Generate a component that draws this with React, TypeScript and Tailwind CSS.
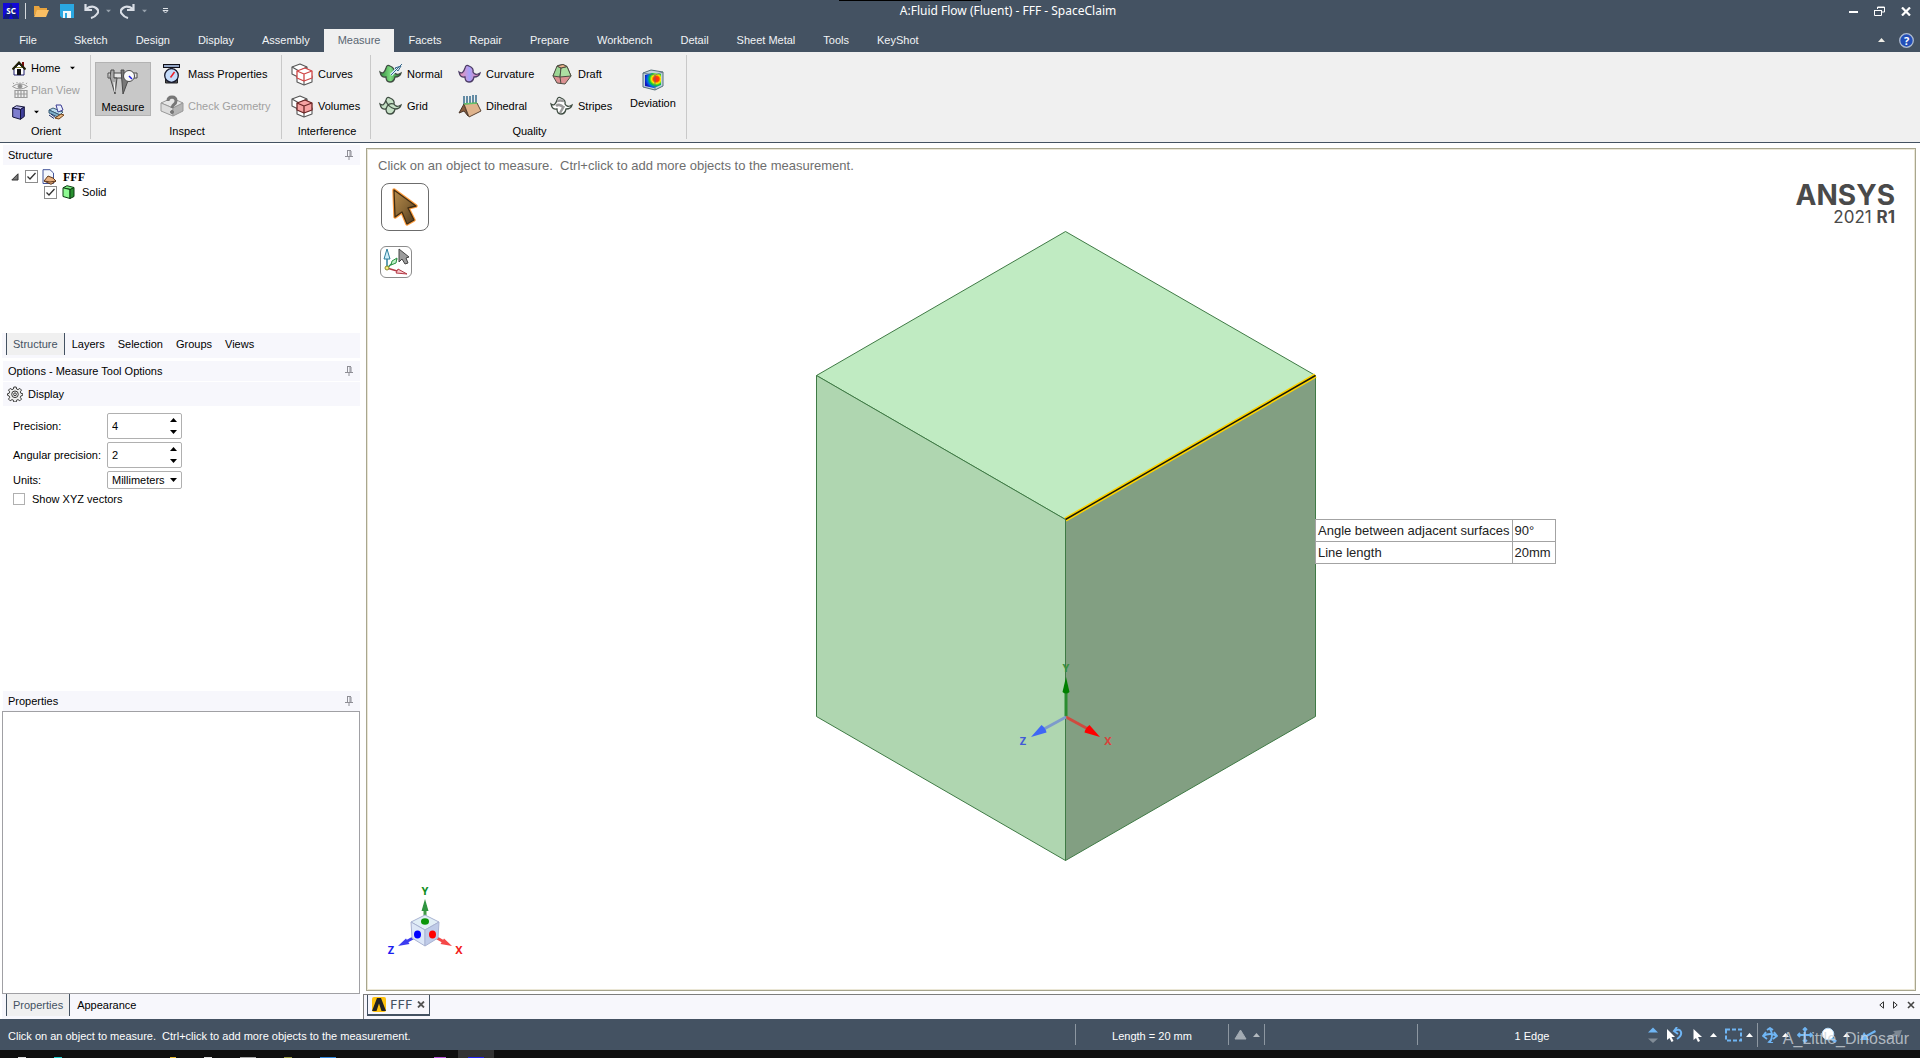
import React, { useState } from "react";

const icon = "shrink-0 block";

function HomeIcon() {
  return (
    <svg className={icon} width="14" height="15" viewBox="0 0 14 15">
      <rect x="10" y="1" width="2" height="5" fill="#7a0d0d" />
      <path d="M2 8v6h10V8L7 3z" fill="#fff" stroke="#1c1c6b" />
      <path d="M0.5 8.500 7 1.500l6.500 7" fill="none" stroke="#222208" strokeWidth="2" />
      <path d="M4 6.500h6" stroke="#8a8a32" />
      <rect x="5" y="8" width="4" height="6" fill="#111" />
    </svg>
  );
}

function PlanViewIcon() {
  return (
    <svg className={icon} width="16" height="16" viewBox="0 0 16 16" fill="none" stroke="#9b9b9b">
      <path d="M0.500 4.500Q8-1 15.500 4.500Q8 9.500.5 4.500z" />
      <path d="M2 2 1 .8M5 1V0M8 .6V0M11 1V0M14 2l1-1.200" />
      <circle cx="8" cy="4.300" r="2" fill="#8f8f8f" />
      <path d="M3 8.500h12v7H3zM3 12h12M6 8.500v7M9 8.500v7M12 8.500v7" strokeWidth="1.200" />
    </svg>
  );
}

function BlueCubeIcon() {
  return (
    <svg className={icon} width="13" height="15" viewBox="0 0 13 15" stroke="#14143c" strokeLinejoin="round">
      <path d="M.7 3 4.500.7 12.300 2 8.500 4.500z" fill="#b5b5e8" />
      <path d="M.7 3 8.500 4.500V14.300L.7 12z" fill="#7d7dce" />
      <path d="M8.500 4.500 12.300 2v9.500L8.500 14.300z" fill="#40409c" />
    </svg>
  );
}

function SpinViewIcon() {
  return (
    <svg className={icon} width="17" height="16" viewBox="0 0 17 16" strokeLinejoin="round">
      <path d="M1 6 5 4l10 4-3 3z" fill="#b9dcee" stroke="#3a5a74" />
      <path d="M8 1h5l2 5-5 2z" fill="#e9eefc" stroke="#3b3b92" />
      <path d="M1 6l11 5v3L1 9z" fill="#7fb0cc" stroke="#3a5a74" />
      <path d="M1 11l5 3.500M3 10l5 4" stroke="#1c2d6b" />
      <path d="M7 14l6-4 3 1-5 4z" fill="#e9b883" stroke="#70451c" />
    </svg>
  );
}

function CaliperIcon() {
  return (
    <svg className={icon} width="32" height="26" viewBox="0 0 32 26" stroke="#4a4a4a">
      <path d="M1 4h29v5H1z" fill="#e5e5e5" />
      <path d="M4 1h3v8h3l-2 16L3 8z" fill="#a8a8a8" />
      <path d="M14 1h3v8h5l-6 16-1-12z" fill="#787878" />
      <path d="M7 13l1 10" stroke="#fff" />
      <circle cx="22" cy="7" r="5.500" fill="#fafafa" />
      <path d="M22 7l3 3" stroke="#1c1ce0" strokeWidth="1.500" />
    </svg>
  );
}

function MassIcon() {
  return (
    <svg className={icon} width="20" height="20" viewBox="0 0 20 20">
      <rect x="1.500" y=".5" width="16" height="3" fill="#93a5c4" stroke="#101018" />
      <path d="M3.500 14v5h12v-5" fill="#555" stroke="#222" />
      <path d="M8 4h3v2H8z" fill="#333" />
      <circle cx="9.500" cy="11.500" r="6.800" fill="#c5dcfb" stroke="#16182c" strokeWidth="1.300" />
      <path d="M8.500 13.500 12.500 8" stroke="#ee1c25" strokeWidth="1.500" />
    </svg>
  );
}

function CheckGeometryIcon() {
  return (
    <svg className={icon} width="24" height="22" viewBox="0 0 24 22" stroke="#999" strokeLinejoin="round">
      <path d="M1 8 12 3l11 5-10 5z" fill="#e6e6e6" />
      <path d="M1 8l12 5v8L1 16z" fill="#dcdcdc" />
      <path d="M13 13l10-5v8l-10 5z" fill="#b5b5b5" />
      <path d="M8 6Q8 2 12 2t4 4q0 2-2 3.500T12 13" fill="none" stroke="#777" strokeWidth="3" />
      <circle cx="12" cy="17" r="1.500" fill="#777" stroke="#777" />
    </svg>
  );
}

function InterferenceIcon({ solid }: { solid?: boolean }) {
  return (
    <svg className={icon} width="23" height="23" viewBox="0 0 23 23" strokeLinejoin="round">
      <g fill="#fff" stroke="#565656" strokeWidth="1.100">
        <path d="M1 4 9 1l7 3v8l-7 3-8-4z" />
        <path d="M1 4l7 4 8-4M8 8v7" />
        <path d="M6 13l7-3 8 3v6l-8 3-7-3z" />
        <path d="M6 13l7 4 8-4M13 17v5" />
      </g>
      <g fill={solid ? "#f7a3a3" : "#fff"} stroke={solid ? "#6b2626" : "#cf4545"} strokeWidth="1.300">
        <path d="M6 8l8-3 7 3v7l-8 3-7-3z" />
        <path d="M6 8l7 3 8-3M13 11v7" />
      </g>
    </svg>
  );
}

const wave = "M1 9Q5 12 7 5q1-4 4-2 5 2 4 6 2 4 7 1-1 4-6 4-1 5-5 5-4 0-4-5-5 1-6-5z";

function WaveIcon({ kind }: { kind: "normal" | "grid" | "curvature" | "stripes" }) {
  const fills = { normal: "url(#waveGreen)", grid: "#c5e0c5", curvature: "url(#waveViolet)", stripes: "#fff" };
  return (
    <svg className={icon} width="24" height="22" viewBox="0 0 24 22" fill="none">
      <defs>
        <linearGradient id="waveGreen">
          <stop offset="0" stopColor="#2f8d3c" />
          <stop offset=".5" stopColor="#7edb80" />
          <stop offset="1" stopColor="#17702a" />
        </linearGradient>
        <linearGradient id="waveViolet">
          <stop offset="0" stopColor="#f58fa8" />
          <stop offset=".5" stopColor="#a8a1fb" />
          <stop offset="1" stopColor="#f07f9b" />
        </linearGradient>
      </defs>
      <path d={wave} fill={fills[kind]} stroke={kind === "curvature" ? "#4c3c66" : "#3f4d42"} strokeWidth="1.300" />
      {kind === "grid" && <path d="M7 14q2-7 8-5M7 6q2 6 9 8" stroke="#3f4d42" strokeWidth="1.200" />}
      {kind === "stripes" && (
        <path d="M7 6q3-1 7 0M6 11q4-3 8 2M10 18l4-7" stroke="#9a9a9a" strokeWidth="2.500" />
      )}
      {kind === "normal" && (
        <>
          <path d="M12 12l6-6" stroke="#dff2ff" strokeWidth="3" />
          <path d="M12 12 23 1M16 5l3 3 3-5z" stroke="#35688d" />
        </>
      )}
    </svg>
  );
}

function DihedralIcon() {
  return (
    <svg className={icon} width="24" height="23" viewBox="0 0 24 23">
      <path d="M6 1v9M9 1v8M12 1v8M15 0v8M18 0v8" stroke="#35698a" strokeWidth="1.500" />
      <path d="M1 18 6 9l4 12-4-5z" fill="#8a5d3e" stroke="#4a3527" />
      <path d="M6 9l13-1 4 8-12 6z" fill="#dfb38c" stroke="#5c4433" />
      <path d="M6 9l13-1" stroke="#63c56b" strokeWidth="1.500" />
    </svg>
  );
}

function DraftIcon() {
  return (
    <svg className={icon} width="20" height="21" viewBox="0 0 20 21" stroke="#4d4d42" strokeLinejoin="round">
      <path d="M6 1.500 11 .5l4 2 4 9.500-6 8-8 -1-4-7z" fill="#dc9192" />
      <path d="M5 2l4 2-1 9-7-1z" fill="#9cd695" />
      <path d="M9 4l6-1.500 4 9.500-11 1z" fill="#acdfa2" />
      <path d="M5 2l6-1.500 4 2L9 4z" fill="#f0b58c" />
      <path d="M8 13l1 7" />
    </svg>
  );
}

function DeviationIcon() {
  return (
    <svg className={icon} width="22" height="22" viewBox="0 0 22 22">
      <defs>
        <radialGradient id="heat" cx=".7" cy=".4" r=".8">
          <stop offset="0" stopColor="#f22" />
          <stop offset=".22" stopColor="#f40" />
          <stop offset=".36" stopColor="#fe0" />
          <stop offset=".52" stopColor="#1c3" />
          <stop offset=".7" stopColor="#06e" />
          <stop offset=".9" stopColor="#11b" />
        </radialGradient>
      </defs>
      <path d="M1 4 9 1l12 2v14l-8 4L1 18z" fill="#bfd3dc" stroke="#566e7b" />
      <path d="M3 6l7-2 9 1v11l-7 3-9-2z" fill="url(#heat)" />
      <path d="M1 4l12 2 8-3M13 6v15" fill="none" stroke="#566e7b" opacity=".7" />
    </svg>
  );
}

function Caret({ up, className = "" }: { up?: boolean; className?: string }) {
  return (
    <svg className={`${icon} ${className}`} width="7" height="4" viewBox="0 0 7 4" fill="currentColor">
      <path d={up ? "M0 4 3.500 0 7 4z" : "M0 0h7L3.500 4z"} />
    </svg>
  );
}

function Pin() {
  return (
    <svg className={icon} width="8" height="10" viewBox="0 0 8 10" fill="none" stroke="#8e8e95">
      <path d="M2 .5h4M2.500 1v5M5 1v5M6 1v5M0 6.500h8M4 7v3" />
    </svg>
  );
}

function PanelHeader({ title }: { title: string }) {
  return (
    <div className="ml-px flex h-5 items-center justify-between bg-[#f7f7fc] pl-[5px] pr-[7px]">
      <h2>{title}</h2>
      <button aria-label={`Pin ${title}`}>
        <Pin />
      </button>
    </div>
  );
}

function PanelTabs({ names }: { names: string[] }) {
  return (
    <div className="flex h-[25px] items-start gap-px bg-[#f7f7fc] pl-1">
      {names.map((name, i) => (
        <button
          key={name}
          className={
            i === 0
              ? "h-[22px] border-x border-[#445262] bg-[#f0f0f0] px-1.5 text-[#445262]"
              : "h-[22px] px-1.5"
          }
        >
          {name}
        </button>
      ))}
    </div>
  );
}

function TreeCheck({ label }: { label: string }) {
  return (
    <span className="relative flex size-[13px] shrink-0">
      <input
        type="checkbox"
        defaultChecked
        aria-label={label}
        className="peer size-[13px] appearance-none border border-[#8c8c8c] bg-white"
      />
      <svg
        className="pointer-events-none absolute inset-0 hidden peer-checked:block"
        width="13"
        height="13"
        viewBox="0 0 13 13"
        fill="none"
        stroke="#333"
        strokeWidth="1.300"
      >
        <path d="M2.500 6.500 5 9l5.500-6" />
      </svg>
    </span>
  );
}

function Spinner({ id, initial }: { id: string; initial: number }) {
  const [value, setValue] = useState(initial);
  return (
    <div className="flex h-[26px] w-[75px] items-center rounded-[2px] border border-[#b0b0b0] bg-white pl-1">
      <input
        id={id}
        type="text"
        value={value}
        onChange={(e) => setValue(Number(e.target.value) || 0)}
        className="min-w-0 flex-1 bg-transparent outline-none"
      />
      <div className="flex h-full w-4 flex-col items-center justify-around">
        <button aria-label="Increase" onClick={() => setValue(value + 1)}>
          <Caret up />
        </button>
        <button aria-label="Decrease" onClick={() => setValue(value - 1)}>
          <Caret />
        </button>
      </div>
    </div>
  );
}

function Tool({ glyph, label, disabled }: { glyph: React.ReactNode; label: string; disabled?: boolean }) {
  return (
    <button disabled={disabled} className="flex h-8 items-center gap-1 whitespace-nowrap disabled:text-[#a0a0a0]">
      <span className="flex w-6 justify-center">{glyph}</span>
      {label}
    </button>
  );
}

function Group({ name, className, children }: { name: string; className: string; children: React.ReactNode }) {
  return (
    <section className={`my-[3px] flex shrink-0 flex-col border-r border-[#c9c9c9] ${className}`}>
      <div className="flex min-h-0 flex-1">{children}</div>
      <h3 className="h-4 pl-0.5 text-center">{name}</h3>
    </section>
  );
}

function TitleBar() {
  return (
    <header className="relative grid h-[22px] grid-cols-[1fr_auto_1fr] items-center text-white">
      <div className="absolute top-0 left-[839px] h-px w-[142px] bg-black" />
      <div className="flex items-center pl-[3px]">
        <svg className={icon} width="16" height="16" viewBox="0 0 16 16">
          <rect width="16" height="16" fill="#1208d8" />
          <path d="M8 0 16 16H10L8 10 6 16H0z" fill="#101a80" />
          <text x="8" y="11" textAnchor="middle" fontSize="8" fontWeight="700" fill="#fff" fontFamily="Noto Sans, sans-serif">
            SC
          </text>
        </svg>
        <div className="mx-1.5 h-4 w-px bg-[#d5d9dd]" />
        <button aria-label="Open" className="ml-0.5">
          <svg className={icon} width="15" height="12" viewBox="0 0 15 12">
            <path d="M0 11V1h5l1 2h7v2H4z" fill="#e8a33d" />
            <path d="M3 5h12l-3 7H0z" fill="#fbbf63" />
          </svg>
        </button>
        <button aria-label="Save" className="ml-[11px]">
          <svg className={icon} width="14" height="14" viewBox="0 0 14 14">
            <path d="M0 0h14v14H2L0 12z" fill="#2aa7e1" />
            <path d="M3 7h8v7H3z" fill="#eef6fa" />
            <path d="M5 9h2v5H5z" fill="#2aa7e1" />
          </svg>
        </button>
        <button aria-label="Undo" className="ml-2.5">
          <svg className={icon} width="15" height="15" viewBox="0 0 15 15" fill="none" stroke="#d9dee6" strokeWidth="2.200">
            <path d="M2 5Q8 1 12 4t1 6q-2 3-6 4" />
            <path d="M1.500 0v6H8" />
          </svg>
        </button>
        <Caret className="ml-1.5 scale-75 text-[#97a2ad]" />
        <button aria-label="Redo" className="ml-2">
          <svg className={icon} width="15" height="15" viewBox="0 0 15 15" fill="none" stroke="#d9dee6" strokeWidth="2.200">
            <path d="M13 5Q7 1 3 4t-1 6q2 3 6 4" />
            <path d="M13.500 0v6H7" />
          </svg>
        </button>
        <Caret className="ml-1.5 scale-75 text-[#97a2ad]" />
        <button aria-label="Customize toolbar" className="ml-3.5">
          <svg className={icon} width="7" height="6" viewBox="0 0 7 6" fill="none" stroke="#dfe3e8">
            <path d="M1 .5h5M1 2.500h5L3.500 5z" />
          </svg>
        </button>
      </div>
      <h1 className="pl-24 font-['Noto_Sans',sans-serif] text-[12px]">A:Fluid Flow (Fluent) - FFF - SpaceClaim</h1>
      <div className="flex items-center justify-end gap-4 pr-[9px]">
        <button aria-label="Minimize">
          <svg className={icon} width="9" height="11" viewBox="0 0 9 11">
            <path d="M0 5h9v2H0z" fill="#fff" />
          </svg>
        </button>
        <button aria-label="Restore">
          <svg className={icon} width="11" height="10" viewBox="0 0 11 10" fill="none" stroke="#fff">
            <path d="M3.500 3V1h7v5H8M3 1.500h8M.5 4v5.500h7V4M0 4.500h8" />
          </svg>
        </button>
        <button aria-label="Close">
          <svg className={icon} width="10" height="9" viewBox="0 0 10 9" stroke="#fff" strokeWidth="2.200">
            <path d="M1 .5 9 8.500M9 .5 1 8.500" />
          </svg>
        </button>
      </div>
    </header>
  );
}

const ribbonTabs = ["Sketch", "Design", "Display", "Assembly", "Measure", "Facets", "Repair", "Prepare", "Workbench", "Detail", "Sheet Metal", "Tools", "KeyShot"];

function RibbonTabs() {
  return (
    <nav className="flex h-[30px] items-end justify-between text-[#f2f4f6]">
      <div className="flex items-end">
        <button className="h-[23px] w-[60px] pr-1 pb-0.5 text-center">File</button>
        {ribbonTabs.map((name) => (
          <button
            key={name}
            className={
              name === "Measure"
                ? "h-[23px] bg-[#f0f0f0] px-3.5 pb-0.5 text-[#5a6672]"
                : "h-[23px] px-3.5 pb-0.5"
            }
          >
            {name}
          </button>
        ))}
      </div>
      <div className="flex h-[23px] items-center gap-3.5 pr-1.5 pb-px">
        <button aria-label="Collapse ribbon">
          <Caret up className="text-[#f0eee6]" />
        </button>
        <button aria-label="Help">
          <svg className={icon} width="15" height="15" viewBox="0 0 15 15">
            <circle cx="7.500" cy="7.500" r="6.800" fill="#234fb8" stroke="#aebbd0" strokeWidth="1.300" />
            <text x="7.500" y="11.500" textAnchor="middle" fontSize="11" fontWeight="700" fill="#fff" fontFamily="Noto Sans, sans-serif">
              ?
            </text>
          </svg>
        </button>
      </div>
    </nav>
  );
}

function Ribbon() {
  return (
    <div className="flex h-[91px] border-b border-[#445262] bg-[#f0f0f0]">
      <Group name="Orient" className="w-[91px]">
        <div className="flex w-full flex-col pt-0.5 pl-3">
          <button className="flex h-[23px] items-center gap-[5px]">
            <HomeIcon />
            Home
            <Caret className="ml-1 scale-75" />
          </button>
          <button disabled className="flex h-[22px] items-center gap-[3px] text-[#a0a0a0]">
            <PlanViewIcon />
            Plan View
          </button>
          <div className="flex h-[22px] items-center">
            <button aria-label="View" className="flex items-center gap-2">
              <BlueCubeIcon />
              <Caret className="scale-75" />
            </button>
            <button aria-label="Snap view" className="ml-2">
              <SpinViewIcon />
            </button>
          </div>
        </div>
      </Group>
      <Group name="Inspect" className="w-[191px]">
        <button className="mt-[7px] ml-1 flex h-[54px] w-14 shrink-0 flex-col items-center justify-between border border-[#b3b3b3] bg-[#c8c8c8] pt-1.5">
          <CaliperIcon />
          Measure
        </button>
        <div className="flex flex-col pt-[3px] pl-[9px]">
          <Tool glyph={<MassIcon />} label="Mass Properties" />
          <Tool glyph={<CheckGeometryIcon />} label="Check Geometry" disabled />
        </div>
      </Group>
      <Group name="Interference" className="w-[89px]">
        <div className="flex flex-col pt-[3px] pl-2">
          <Tool glyph={<InterferenceIcon />} label="Curves" />
          <Tool glyph={<InterferenceIcon solid />} label="Volumes" />
        </div>
      </Group>
      <Group name="Quality" className="w-[316px]">
        <div className="flex w-[79px] flex-col pt-[3px] pl-2">
          <Tool glyph={<WaveIcon kind="normal" />} label="Normal" />
          <Tool glyph={<WaveIcon kind="grid" />} label="Grid" />
        </div>
        <div className="flex w-[92px] flex-col pt-[3px] pl-2">
          <Tool glyph={<WaveIcon kind="curvature" />} label="Curvature" />
          <Tool glyph={<DihedralIcon />} label="Dihedral" />
        </div>
        <div className="flex w-[80px] flex-col pt-[3px] pl-2">
          <Tool glyph={<DraftIcon />} label="Draft" />
          <Tool glyph={<WaveIcon kind="stripes" />} label="Stripes" />
        </div>
        <button className="mt-3.5 flex h-[42px] flex-col items-center justify-between pl-2">
          <DeviationIcon />
          Deviation
        </button>
      </Group>
    </div>
  );
}

function Sidebar() {
  return (
    <aside className="flex w-[360px] shrink-0 flex-col bg-white pt-0.5 pl-0.5">
      <PanelHeader title="Structure" />
      <div className="h-[168px]">
        <div className="flex h-[19px] items-center pt-1 pl-[9px]">
          <svg className={icon} width="8" height="8" viewBox="0 0 8 8">
            <path d="M7 .8V7H.8z" fill="#777" stroke="#333" />
          </svg>
          <span className="ml-1.5">
            <TreeCheck label="FFF" />
          </span>
          <svg className={`ml-1 ${icon}`} width="15" height="16" viewBox="0 0 15 16">
            <path d="M1 .7h7L11.500 4v10.500H1z" fill="#f4f7fd" stroke="#42549a" />
            <path d="M2 12l4-5 5 2 3 3-5 3.300z" fill="#e8b080" stroke="#60391c" />
            <path d="M2 12l6 1 6-1" fill="none" stroke="#60391c" />
          </svg>
          <span className="ml-1.5 font-['Liberation_Serif',serif] text-[12px] font-black">FFF</span>
        </div>
        <div className="flex h-4 items-center pl-[42px]">
          <TreeCheck label="Solid" />
          <svg className={`ml-[5px] ${icon}`} width="13" height="14" viewBox="0 0 13 14" stroke="#0c3d12" strokeLinejoin="round">
            <path d="M1 2.800 5 .7l7 1.800-3 2z" fill="#7df084" />
            <path d="M1 2.800 8 4.500v9L1 11.500z" fill="#8efa92" />
            <path d="M8 4.500l4-2v9l-4 2z" fill="#28902f" />
          </svg>
          <span className="ml-[7px]">Solid</span>
        </div>
      </div>
      <PanelTabs names={["Structure", "Layers", "Selection", "Groups", "Views"]} />

      <div className="mt-[3px]">
        <PanelHeader title="Options - Measure Tool Options" />
      </div>
      <div className="mt-px ml-px flex h-6 items-center gap-[5px] bg-[#f7f7fc] pl-1">
        <svg className={icon} width="16" height="16" viewBox="0 0 16 16" fill="none" stroke="#3a3a3a">
          <path d="M6.800 1h2.400l.4 2 1.400.600 1.800-1.200 1.700 1.700-1.200 1.800.6 1.400 1.900.4v1.600l-1.900.6-.6 1.400 1.200 1.800-1.700 1.700-1.800-1.200-1.400.600-.4 1.800H6.800l-.4-1.800-1.400-.600-1.800 1.200-1.700-1.700 1.200-1.800-.6-1.400L.5 9.300V7.700l1.600-.4.6-1.400-1.200-1.800 1.700-1.700L5 3.600l1.400-.600z" fill="#eee" />
          <circle cx="8" cy="8.300" r="3.300" />
          <circle cx="8" cy="8.300" r="1.400" />
        </svg>
        Display
      </div>
      <div className="flex flex-1 flex-col pt-[7px] pl-[11px]">
        <div className="grid grid-cols-[94px_auto] items-center justify-start gap-y-[3px]">
          <label htmlFor="precision">Precision:</label>
          <Spinner id="precision" initial={4} />
          <label htmlFor="angular">Angular precision:</label>
          <Spinner id="angular" initial={2} />
          <label htmlFor="units">Units:</label>
          <div className="relative flex">
            <select id="units" className="h-[18px] w-[75px] appearance-none rounded-[2px] border border-[#b0b0b0] bg-white pl-1 leading-4">
              <option>Millimeters</option>
              <option>Centimeters</option>
              <option>Inches</option>
            </select>
            <Caret className="pointer-events-none absolute top-[7px] right-[5px]" />
          </div>
        </div>
        <label className="mt-0.5 flex h-4 items-center gap-[7px]">
          <input type="checkbox" className="size-3 appearance-none border border-[#b0b0b0] bg-white" />
          Show XYZ vectors
        </label>
      </div>

      <PanelHeader title="Properties" />
      <div className="h-[283px] border border-[#a0a0a4] bg-white" />
      <PanelTabs names={["Properties", "Appearance"]} />
    </aside>
  );
}

function Model() {
  return (
    <svg className="absolute top-[80px] left-[446px]" width="504" height="634" viewBox="814 230 504 634">
      <g stroke="#3f7a45" strokeLinejoin="round">
        <path d="M1065.500 231.500 1315.500 375.500 1065.500 519.500 816.500 375.500z" fill="#c0ebc2" />
        <path d="M816.500 375.500 1065.500 519.500V860.500L816.500 716.500z" fill="#afd6b0" />
        <path d="M1065.500 519.500 1315.500 375.500V716.500L1065.500 860.500z" fill="#829f82" />
      </g>
      <path d="M1065.500 519.500 1315.500 375.500" stroke="#ffd500" strokeWidth="4.500" />
      <path d="M1065.500 519.500 1315.500 375.500" stroke="#1c1a08" strokeWidth="1.500" />
      <path d="M1066 716v-30" stroke="#2b8c30" strokeWidth="3" />
      <path d="M1066 677l3.500 15q-3.500 3-7 0z" fill="#008000" />
      <path d="M1066 717l22 12" stroke="#cf4a3f" strokeWidth="3" />
      <path d="M1100 737l-15.500-4.500q.5-4 5-7.500z" fill="#f00" />
      <path d="M1066 717l-22 12" stroke="#7d9bcb" strokeWidth="3" />
      <path d="M1031 737l15.500-4.500q-.5-4-5-7.500z" fill="#3f66f5" />
      <g fontFamily="Noto Sans, sans-serif" fontSize="11" fontWeight="700" textAnchor="middle">
        <text x="1066" y="672" fill="#379040">Y</text>
        <text x="1108" y="745" fill="#d8443c">X</text>
        <text x="1023" y="745" fill="#4159d8">Z</text>
      </g>
    </svg>
  );
}

function AxisTriad() {
  return (
    <svg className="absolute bottom-[22px] left-[16px]" width="84" height="86" viewBox="0 -6 84 86">
      <path d="M41 30V18" stroke="#3f9a45" strokeWidth="3" />
      <path d="M41 12l3.500 12h-7z" fill="#2f9440" />
      <path d="M29 51l-9 5" stroke="#3c3cf0" strokeWidth="3" />
      <path d="M14 59l8-7.500 3.500 5.500z" fill="#3c3cf0" />
      <path d="M53 51l9 5" stroke="#f54848" strokeWidth="3" />
      <path d="M68 59l-8-7.500-3.500 5.500z" fill="#f54848" />
      <g stroke="#a9b3d2" strokeLinejoin="round">
        <path d="M41 28l14 7-14 8-14-8z" fill="#e1eef6" />
        <path d="M27 35l14 8v16l-13-8z" fill="#dde7f7" />
        <path d="M55 35l-14 8v16l13-8z" fill="#bfcbe8" />
      </g>
      <ellipse cx="41" cy="34.500" rx="4" ry="3.200" fill="#0a960a" />
      <ellipse cx="33.500" cy="47.500" rx="3.500" ry="4" fill="#00f" />
      <ellipse cx="48.500" cy="47.500" rx="3.500" ry="4" fill="#f00" />
      <g fontFamily="Noto Sans, sans-serif" fontSize="11" fontWeight="700" textAnchor="middle">
        <text x="41" y="8" fill="#0f8f1f">Y</text>
        <text x="75" y="67" fill="#f21c1c">X</text>
        <text x="7" y="67" fill="#1c1cf0">Z</text>
      </g>
    </svg>
  );
}

function Viewport() {
  return (
    <main className="mt-[5px] mr-1 ml-1.5 flex min-h-0 flex-1 border border-[#a8a68f]">
      <div className="relative flex flex-1 items-start justify-between overflow-hidden border border-[#ebe7d6] bg-white">
        <Model />
        <AxisTriad />
        <div className="relative pt-2 pl-2.5 text-[13px]">
          <p className="whitespace-pre leading-4 text-[#6e6e6e]">
            {"Click on an object to measure.  Ctrl+click to add more objects to the measurement."}
          </p>
          <button aria-label="Select" className="mt-[9px] ml-[3px] flex size-12 items-center justify-center rounded-lg border border-[#6c6c6c] bg-white">
            <svg className={icon} width="28" height="40" viewBox="0 0 28 40" strokeLinejoin="round">
              <defs>
                <linearGradient id="bronze" x1="0" y1="0" x2="1" y2="1">
                  <stop offset="0" stopColor="#b58a4c" />
                  <stop offset=".5" stopColor="#8a6836" />
                  <stop offset="1" stopColor="#4a3720" />
                </linearGradient>
              </defs>
              <path d="M3 3 25 19 17 21 23 33 16 37 11 25 4 30z" fill="none" stroke="#ff9f40" strokeWidth="3.500" />
              <path d="M3 3 25 19 17 21 23 33 16 37 11 25 4 30z" fill="url(#bronze)" stroke="#402c12" strokeWidth="1.300" />
            </svg>
          </button>
          <button aria-label="Measure from origin" className="mt-[15px] ml-0.5 flex size-8 items-center justify-center rounded-md border border-[#8c8c8c] bg-white">
            <svg className={icon} width="28" height="28" viewBox="0 0 28 28" strokeLinejoin="round">
              <path d="M5 20V10" stroke="#2d7f9c" strokeWidth="1.500" />
              <path d="M5 1 8 11H2z" fill="#cfeef8" stroke="#2d7f9c" />
              <path d="M5 20 15 11" stroke="#2b9044" strokeWidth="1.500" />
              <path d="M9 17l1-4 5-3-1 5z" fill="#bdf0c5" stroke="#2b9044" />
              <path d="M5 20l10 3" stroke="#b33a46" strokeWidth="1.500" />
              <path d="M25 26l-11-1 2-4z" fill="#f7c6ca" stroke="#b33a46" />
              <circle cx="5" cy="20" r="2" fill="#f4f07a" stroke="#8d8530" />
              <path d="M17 1v13l3-3 3 5 3-1-2-5 3-1z" fill="#9c9c9c" stroke="#444" />
            </svg>
          </button>
        </div>
        <div className="relative mt-[31px] mr-[19px] text-right font-['Inter',sans-serif] text-[#4a4a4a]">
          <p className="text-[28px] leading-7 font-bold">ANSYS</p>
          <p className="text-[17px] leading-4">
            2021 <b>R1</b>
          </p>
        </div>
        <table className="absolute top-[369px] left-[947px] border-collapse bg-white text-[13px] leading-4 text-[#222]">
          <tbody>
            <tr>
              <th className="h-[22px] w-[196px] border border-[#a3a3a3] px-0.5 text-left font-normal whitespace-nowrap">Angle between adjacent surfaces</th>
              <td className="w-[43px] border border-[#a3a3a3] px-0.5">90°</td>
            </tr>
            <tr>
              <th className="h-[22px] border border-[#a3a3a3] px-0.5 text-left font-normal">Line length</th>
              <td className="border border-[#a3a3a3] px-0.5">20mm</td>
            </tr>
          </tbody>
        </table>
      </div>
    </main>
  );
}

function DocumentTabs() {
  return (
    <div className="mt-[3px] ml-[3px] flex h-[25px] items-start justify-between border-t border-l border-[#7d7d7d] bg-[#f7f7fc] pl-[3px]">
      <div className="flex h-[21px] items-center border-x border-b-2 border-[#445262] px-1">
        <svg className={icon} width="14" height="15" viewBox="0 0 14 15">
          <rect width="14" height="15" rx="2" fill="#ffc20e" />
          <path d="M5 1h4l5 13H9.500L7 6.500 4.500 14H0z" fill="#222" />
        </svg>
        <button className="ml-1 font-['DejaVu_Sans',sans-serif] text-[13px] text-[#445262]">FFF</button>
        <button aria-label="Close FFF" className="ml-[5px]">
          <svg className={icon} width="8" height="7" viewBox="0 0 8 7" stroke="#555" strokeWidth="1.800">
            <path d="M1 .5 7 6.500M7 .5 1 6.500" />
          </svg>
        </button>
      </div>
      <div className="flex h-5 items-center gap-[9px] pr-[5px]">
        <button aria-label="Previous document">
          <svg className={icon} width="5" height="8" viewBox="0 0 5 8" fill="none" stroke="#333">
            <path d="M4.500 .8v6.400L.8 4z" />
          </svg>
        </button>
        <button aria-label="Next document">
          <svg className={icon} width="5" height="8" viewBox="0 0 5 8" fill="none" stroke="#333">
            <path d="M.5 .8v6.400L4.200 4z" />
          </svg>
        </button>
        <button aria-label="Close document">
          <svg className={icon} width="8" height="8" viewBox="0 0 8 8" stroke="#444" strokeWidth="1.600">
            <path d="M1 1 7 7M7 1 1 7" />
          </svg>
        </button>
      </div>
    </div>
  );
}

function StatusIcon({ label, width, children }: { label: string; width: number; children: React.ReactNode }) {
  return (
    <button aria-label={label} className="shrink-0">
      <svg className={icon} width={width} height="16" viewBox={`0 0 ${width} 16`}>
        {children}
      </svg>
    </button>
  );
}

const divider = <div className="my-[5px] w-px shrink-0 bg-[#8d97a1]" />;

function StatusBar() {
  return (
    <footer className="relative flex h-[31px] shrink-0 bg-[#445262] text-white">
      <p className="flex flex-1 items-center pt-0.5 pl-2 whitespace-pre">
        {"Click on an object to measure.  Ctrl+click to add more objects to the measurement."}
      </p>
      {divider}
      <p className="flex w-[152px] items-center justify-center pt-0.5">Length = 20 mm</p>
      {divider}
      <button aria-label="Notifications" className="flex w-[35px] items-center justify-center gap-1.5">
        <svg className={icon} width="13" height="11" viewBox="0 0 13 11">
          <path d="M6.500 1 12 10H1z" fill="#a3abb3" stroke="#a3abb3" strokeLinejoin="round" />
        </svg>
        <Caret up className="text-[#b4bac0]" />
      </button>
      {divider}
      <div className="w-[152px]" />
      {divider}
      <p className="flex w-[230px] items-center justify-center pt-0.5 pr-0.5">1 Edge</p>
      <div className="flex w-[272px] items-center">
        <StatusIcon label="Cycle selection" width={10}>
          <path d="M0 5.500 5 .5l5 5z" fill="#6fb5f4" />
          <path d="M0 11.500h10l-5 4.500z" fill="#818c97" />
        </StatusIcon>
        <div className="ml-2 flex">
          <StatusIcon label="Previous selection" width={17}>
            <path d="M1 2v11l2.500-2 2 4 2-1-2-4H9z" fill="#fff" />
            <path d="M8 4q6-3 7 1t-4 7M11 0 8 4l4 3" fill="none" stroke="#6fb5f4" strokeWidth="2" />
          </StatusIcon>
        </div>
        <div className="ml-2.5 flex items-center gap-2">
          <StatusIcon label="Select mode" width={9}>
            <path d="M.5 2v11L3 11l2 4 2-1-2-4h4z" fill="#fff" />
          </StatusIcon>
          <Caret up />
          <StatusIcon label="Box select" width={17}>
            <path d="M1 2.500h15v11H1z" fill="none" stroke="#6fb5f4" strokeWidth="2" strokeDasharray="4 2" />
          </StatusIcon>
        </div>
        <Caret up className="ml-1" />
        <div className="mx-1 h-6 w-px bg-[#8d97a1]" />
        <StatusIcon label="Spin" width={16}>
          <path d="M1 9q7-4 14 0M8 2q4 6 0 13M4 5 1 9l4 3M12 5l3 4-4 3M5 3l3-2 3 2M10 12l-3 3 4 1" fill="none" stroke="#6fb5f4" strokeWidth="1.800" />
        </StatusIcon>
        <Caret up className="ml-1" />
        <div className="ml-2 flex">
          <StatusIcon label="Pan" width={16}>
            <path d="M1 8h14M8 1v14M13 6l2 2-2 2M3 6 1 8l2 2M6 3l2-2 2 2M6 13l2 2 2-2" fill="none" stroke="#6fb5f4" strokeWidth="1.800" />
          </StatusIcon>
        </div>
        <div className="ml-2 flex items-center gap-1.5">
          <StatusIcon label="Zoom" width={16}>
            <path d="M10 11l5 4" stroke="#6fb5f4" strokeWidth="3" />
            <circle cx="7" cy="7" r="5.800" fill="#fff" stroke="#b8dcfa" />
          </StatusIcon>
          <Caret up />
        </div>
        <div className="ml-2.5 flex gap-3">
          <StatusIcon label="Previous view" width={16}>
            <path d="M0 13 4 5l2 3 9-5 1 2-9 5 2 3z" fill="#6fb5f4" />
          </StatusIcon>
          <StatusIcon label="Next view" width={14}>
            <path d="M14 3l-3 8-2-3-8 5-1-3 7-4-2-2z" fill="#7e8893" />
          </StatusIcon>
        </div>
      </div>
      <span className="pointer-events-none absolute right-[11px] bottom-px text-[16px] leading-5 text-[#ccd3d9]/80">A_Little_Dinosaur</span>
    </footer>
  );
}

function Taskbar() {
  return (
    <div className="flex h-2 shrink-0 items-end bg-[#0f0f0f]">
      <div className="flex items-end gap-7 pl-[18px]">
        <i className="h-px w-2 bg-[#ddd]" />
        <i className="h-px w-2 bg-[#2cc]" />
        <i className="ml-20 h-px w-1.5 bg-[#e5b830]" />
        <i className="h-px w-2 bg-[#ddd]" />
        <i className="h-px w-4 bg-[#aaa]" />
        <i className="h-px w-2 bg-[#994]" />
        <i className="h-px w-4 bg-[#38d]" />
      </div>
      <i className="ml-[98px] h-px w-3 bg-[#b5d]" />
      <div className="ml-3 flex h-2 w-9 items-end justify-center bg-[#333]">
        <i className="h-px w-4 bg-[#22e]" />
      </div>
    </div>
  );
}

export default function App() {
  return (
    <div className="flex h-screen flex-col overflow-hidden bg-[#445262] font-['Liberation_Sans',Arial,sans-serif] text-[11px] leading-4 text-black">
      <TitleBar />
      <RibbonTabs />
      <Ribbon />
      <div className="flex min-h-0 flex-1 bg-white">
        <Sidebar />
        <div className="flex min-w-0 flex-1 flex-col">
          <Viewport />
          <DocumentTabs />
        </div>
      </div>
      <StatusBar />
      <Taskbar />
    </div>
  );
}
